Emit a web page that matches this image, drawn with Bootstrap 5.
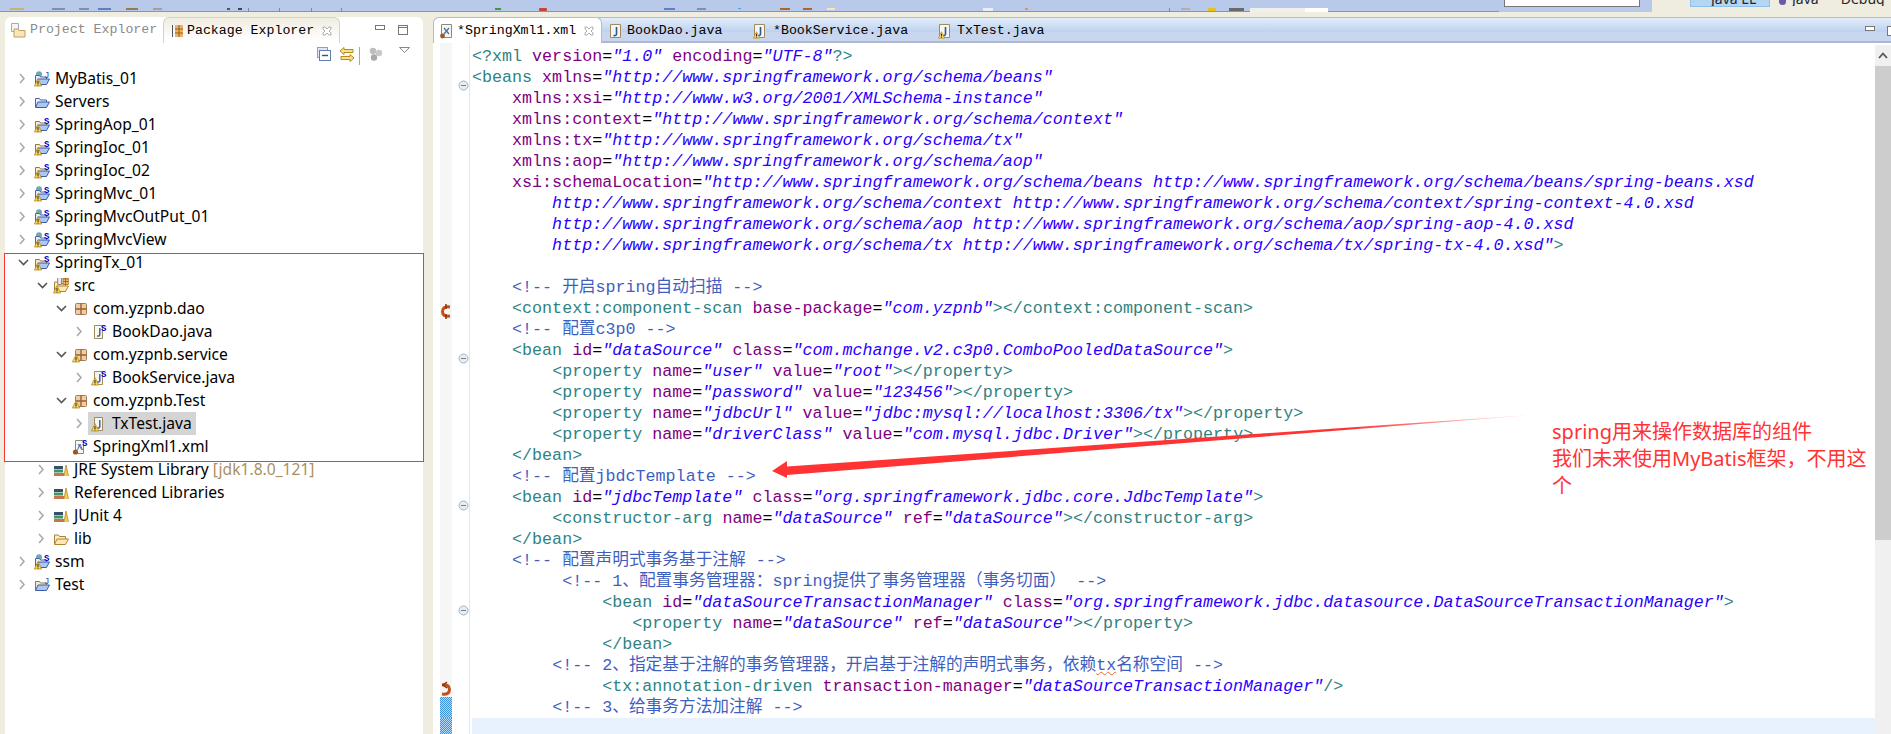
<!DOCTYPE html>
<html lang="zh-CN">
<head>
<meta charset="utf-8">
<title>Eclipse - SpringXml1.xml</title>
<link rel="stylesheet" href="https://cdn.jsdelivr.net/npm/bootstrap@5.3.0/dist/css/bootstrap.min.css">
<style>
html,body{height:734px;overflow:hidden}
body{background:#efece0;position:relative;margin:0;font-family:"Noto Sans","Noto Sans CJK SC",sans-serif}
.topstrip{height:12px;background:#b8c9ea;overflow:hidden}
.stripline{width:1499px;height:12px;border-bottom:1px solid #8295bd;flex:none}
.searchbox{width:136px;height:7px;margin-left:5px;background:#fff;border:1px solid #777;border-top:0;flex:none}
.sashend{width:8px;margin-left:4px;height:12px;background:#b8c9ea;flex:none}
.beige{flex:1;background:#efece0;height:12px;display:flex;align-items:flex-start;position:relative;overflow:hidden;font-size:14px;line-height:14px}
.persp{margin-left:38px;width:80px;height:7px;background:#b5d6f2;border:1px solid #8fc0ea;border-top:0;overflow:hidden;padding-left:20px;flex:none}
.persp span,.persp2 span{display:block;margin-top:-8px;white-space:nowrap}
.persp2{margin-left:8px;height:6px;overflow:hidden;flex:none;padding-left:14px}
.pdot{width:7px;height:5px;background:#6a5aa8;border-radius:0 0 4px 4px;margin-left:9px;flex:none}
.persp2.afterdot{margin-left:6px;padding-left:0}
.stage{height:722px;padding-top:5px;gap:10px}
.leftpane{width:418px;margin-left:5px;background:#fff;border-radius:6px 6px 0 0;flex:none}
.ptabs{height:26px}
.ptab{height:26px;font:13.25px/26px "Liberation Mono",monospace;white-space:pre}
.ptab-off{width:158px;padding-left:5px;color:#8a8a8a}
.ptab-on{width:177px;padding-left:7px;color:#000;border:1px solid #d6d4c8;border-bottom:0;border-radius:6px 6px 0 0;background:linear-gradient(#efece0,#fff 90%)}
.ptab-icon{width:16px;height:16px;margin-right:4px;flex:none}
.ptab-on .ptab-icon{width:12px}
.minmax{margin-left:35px;gap:13px;height:20px}
.viewbar{height:24px;padding-left:312px}
.tree{font-size:15.6px;line-height:23px;color:#000}
.trow{height:23px;white-space:nowrap}
.lv0{padding-left:13px}.lv1{padding-left:32px}.lv2{padding-left:51px}.lv3{padding-left:70px}
.tw{width:11px;height:23px;flex:none;margin-right:5px}
.ic{width:16px;height:16px;flex:none;margin-right:5px}
.sel{background:#d4d4d4;height:23px;padding-left:3px;padding-right:4px;margin-left:-3px}
.deco{color:#a89060}
.editor{min-width:0}
.etabs{height:26px;background:linear-gradient(#e4edf9,#bdd2ef 60%,#bdd2ef 61%,#c9d6f0 62%,#c9d6f0);border-top:1px solid #a9c0dd;border-bottom:2px solid #aeb7cf;border-radius:6px 0 0 0;font:13.25px/23px "Liberation Mono",monospace;white-space:pre;color:#000}
.etab{height:25px;flex:none}
.etab-on{width:169px;background:#fff;padding-left:6px;border:1px solid #a9c0dd;border-bottom:0;border-radius:6px 6px 0 0;margin-top:-1px;height:26px}
.et2{width:146px;padding-left:7px;gap:5px}.et3{width:190px;padding-left:5px;gap:7px}.et4{width:120px;padding-left:0;gap:6px}
.etabicon{width:13px;height:16px;flex:none}
.emin{margin-left:auto;margin-right:2px;gap:12px;width:24px}
.ebody{min-height:0;background:#fff}
.codecol{flex:1;min-width:0;overflow:hidden;padding-top:3px;background:linear-gradient(90deg,#fff 7px,#f6f6f6 7px 19px,#fff 19px 36px,#e6e6e6 36px 37px,#fff 37px)}
.cl{height:21px;display:flex}
.gt{width:39px;height:21px;flex:none;display:flex}
.an{width:12px;margin-left:7px;height:21px;flex:none}
.hatch{background:#6aaee6 repeating-conic-gradient(#3d94dc 0 25%,#b4d8f4 0 50%) 0 0/2px 2px}
.fd{width:17px;height:21px;flex:none;padding:5px 0 0 6px}
.tx{font:16.7px/21px "Liberation Mono","Noto Sans CJK SC",monospace;white-space:pre;flex:1;color:#000}
.t{color:#2f8383}.a{color:#7f007f}.v{color:#2a00ff;font-style:italic}.c{color:#3f5fbf}
.curline{background:#e8f2fe}
.spell{text-decoration:underline wavy #e8692a 1px}
.vbar{width:16px;flex:none;background:#f0f0f0;margin-top:2px}
.vbtn{height:21px;text-align:center;padding-top:7px}
.vthumb{height:474px;background:#cdcdcd}
.redbox{position:absolute;left:4px;top:253px;width:420px;height:209px;border:1.5px solid #f33;pointer-events:none}
.overlay{position:absolute;left:0;top:0;pointer-events:none}
.note{position:absolute;left:1552px;top:418px;font:20px/27px "Noto Sans","Noto Sans CJK SC",sans-serif;color:#f33;white-space:pre}
</style>
</head>
<body>
<svg width="0" height="0" class="position-absolute">
<defs>
<symbol id="fb" viewBox="0 0 16 16"><path d="M1.5 13V4.5h4l1 1.5h6v2" fill="#e6edf8" stroke="#4a65a8"/><path d="M1.5 13.5 4 8h11.5l-3 5.5z" fill="#a9c9f2" stroke="#3e5aa6"/></symbol>
<symbol id="ft" viewBox="0 0 16 16"><path d="M1.5 13V4.5h4l1 1.5h6v2" fill="#f8ecc8" stroke="#8d7a4d"/><path d="M1.5 13.5 4 8h11.5l-3 5.5z" fill="#a9c9f2" stroke="#3e5aa6"/></symbol>
<symbol id="fy" viewBox="0 0 16 16"><path d="M1.5 13V4h4l1 1.5h6V8" fill="#fbeec6" stroke="#a8803a"/><path d="M1.5 13.5 4 8h11.5l-3 5.5z" fill="#fde9b0" stroke="#b08436"/></symbol>
<symbol id="wn" viewBox="0 0 16 16"><path d="M4 7.7 7.6 15H.4z" fill="#fbd85c" stroke="#b88a22" stroke-width=".8"/><rect x="3.5" y="10" width="1" height="3" fill="#222"/><rect x="3.5" y="13.5" width="1" height="1" fill="#222"/></symbol>
<symbol id="gl" viewBox="0 0 16 16"><circle cx="5" cy="3.2" r="3" fill="#6ba6c6"/><path d="M3 2h2l1 2-2 1.5z" fill="#7bb46a"/></symbol>
<symbol id="pk" viewBox="0 0 16 16"><rect x="3.5" y="2.5" width="11" height="11" rx="1" fill="#eccfa8" stroke="#a87b4f"/><path d="M9 2.5v11M3.5 8h11" stroke="#9c5f35" stroke-width="1.4"/></symbol>
<symbol id="pg" viewBox="0 0 16 16"><path d="M3.5 1.5h8v13h-8z" fill="#f7f6ef" stroke="#a08c5c"/><path d="M8.8 4v6.5q0 2-2.8 1.5" fill="none" stroke="#3c63ad" stroke-width="1.5"/></symbol>
<symbol id="xp" viewBox="0 0 16 16"><path d="M3.5 1.5h8v13h-8z" fill="#f7f6ef" stroke="#8b8b7a"/><path d="M5.5 11 8 5l2.5 6M6 5l4 6" fill="none" stroke="#4a6fa8" stroke-width="1"/><circle cx="3.5" cy="13" r="2.6" fill="#96592f"/></symbol>
<symbol id="lb" viewBox="0 0 16 16"><rect x="1" y="4" width="9" height="3" fill="#3a4f6a"/><rect x="1" y="7.5" width="9" height="3" fill="#3f9468"/><rect x="1" y="11" width="10" height="3" fill="#c8744a"/><path d="M11 14 13 3l2.5 11" fill="#f5cb55" stroke="#b88a22" stroke-width=".8"/></symbol>
<symbol id="ps" viewBox="0 0 16 16"><rect x="1" y="1" width="5" height="13" fill="#e8e8f0" stroke="#7d6a3a"/><rect x="8" y="3" width="7" height="11" fill="#f0c070" stroke="#9a5e20"/><path d="M8 6.5h7M8 10h7M11.5 3v11" stroke="#8a4a18"/></symbol>
<symbol id="chr" viewBox="0 0 11 23"><path d="M2 7l4 4.500-4 4.500" fill="none" stroke="#aaa" stroke-width="1.600"/></symbol>
<symbol id="chd" viewBox="0 0 11 23"><path d="M1 9l4.500 4.500L10 9" fill="none" stroke="#555" stroke-width="1.600"/></symbol>
<symbol id="fold" viewBox="0 0 11 11"><circle cx="5.500" cy="5.500" r="4.500" fill="#e8edf2" stroke="#a4b2c0"/><path d="M3 5.500h5" stroke="#6f8193"/></symbol>
</defs>
</svg>

<div class="topstrip d-flex">
  <div class="stripline">
    <svg width="1499" height="11" aria-hidden="true">
      <g>
      <rect x="10" width="14" height="2" fill="#c9b27a"/><rect x="52" width="13" height="2" fill="#7d8fb5"/><rect x="79" width="10" height="2" fill="#7d8fb5"/><rect x="98" width="13" height="2" fill="#5f7fc0"/><rect x="126" width="12" height="2" fill="#96794a"/><rect x="153" width="9" height="2" fill="#a0a098"/><rect x="227" width="3" height="2" fill="#555"/><rect x="238" width="4" height="2" fill="#444"/>
      <rect x="248" width="1" height="5" fill="#7a8aa8"/><rect x="279" width="1" height="5" fill="#7a8aa8"/><rect x="311" width="1" height="5" fill="#7a8aa8"/><rect x="341" width="1" height="5" fill="#7a8aa8"/>
      <rect x="495" width="6" height="2" fill="#3a9a4a"/><rect x="539" width="8" height="3" rx="1" fill="#c8443c"/><rect x="664" width="11" height="2" fill="#5f7fc0"/><rect x="697" width="9" height="2" fill="#7d8fb5"/><rect x="738" width="3" height="1" fill="#5a9ad0"/><rect x="780" width="10" height="2" fill="#b0642a"/><rect x="803" width="9" height="2" fill="#b0642a"/><rect x="827" width="8" height="2" fill="#f5e9b5"/>
      <rect x="983" width="10" height="3" fill="#e8eef8"/><rect x="1025" width="3" height="2" fill="#d9a030"/><rect x="1169" width="1" height="5" fill="#7a8aa8"/><rect x="1181" width="9" height="2" fill="#b0b0a8"/><rect x="1208" width="8" height="3" fill="#e8c020"/><rect x="1229" width="15" height="3" fill="#6a6a6a"/>
      <rect x="1250" width="55" height="5" fill="#efefef"/><rect x="1305" width="23" height="5" fill="#fff"/>
      </g>
    </svg>
  </div>
  <div class="searchbox"></div>
  <div class="sashend"></div>
  <div class="beige">
    <div class="persp"><span>Java EE</span></div>
    <div class="pdot"></div>
    <div class="persp2 afterdot"><span>Java</span></div>
    <div class="persp2"><span>Debug</span></div>
  </div>
</div>

<div class="stage d-flex">
  <div class="leftpane d-flex flex-column">
    <div class="ptabs d-flex">
      <div class="ptab ptab-off d-flex align-items-center"><svg class="ptab-icon" viewBox="0 0 16 16"><path d="M1.5 1.5h7v8h-7z" fill="#f4f4f4" stroke="#aaa"/><path d="M4 7h4l1 1.5h6V15H4z" fill="#f8e6b8" stroke="#c0a060"/></svg><span>Project Explorer</span></div>
      <div class="ptab ptab-on d-flex align-items-center"><svg class="ptab-icon" viewBox="0 0 12 16"><path d="M1.500 2v12" stroke="#555" fill="none"/><rect x="4" y="2" width="8" height="12" fill="#e9b26a"/><path d="M4 6h8M4 10h8M8 2v12" stroke="#9c5f1e"/></svg><span>Package Explorer</span><svg class="ms-2" width="10" height="10" viewBox="0 0 10 10"><path d="M1 1h2l2 2 2-2h2v2L7 5l2 2v2H7L5 7 3 9H1V7l2-2-2-2z" fill="#fff" stroke="#999" stroke-width=".8"/></svg></div>
      <div class="minmax d-flex align-items-start pt-2">
        <svg width="10" height="5"><rect x=".5" y=".5" width="9" height="4" fill="#fff" stroke="#777"/></svg>
        <svg width="10" height="10"><rect x=".5" y=".5" width="9" height="9" fill="#fff" stroke="#777"/><path d="M0 2.5h10" stroke="#777"/></svg>
      </div>
    </div>
    <div class="viewbar d-flex align-items-start pt-1">
      <svg width="14" height="14" viewBox="0 0 14 14"><rect x=".5" y=".5" width="10" height="10" fill="#dfe8f4" stroke="#8aa0c0"/><rect x="2.5" y="3.5" width="11" height="10" fill="#fff" stroke="#5f80ad"/><path d="M5 8.5h6" stroke="#2c558c" stroke-width="1.4"/></svg>
      <svg class="ms-2" width="16" height="15" viewBox="0 0 16 15"><path d="M5 .5 1 4l4 3.5V5.5h9v-3H5z" fill="#f8e28a" stroke="#b58a1a"/><path d="M11 7.5l4 3.5-4 3.5v-2H2v-3h9z" fill="#f8e28a" stroke="#b58a1a"/></svg>
      <svg class="ms-1" width="2" height="18"><rect width="1" height="18" fill="#a8a8a8"/></svg>
      <svg class="ms-2" width="14" height="14" viewBox="0 0 14 14"><circle cx="4" cy="4" r="3.2" fill="#bdbdbd"/><circle cx="10" cy="6" r="3.2" fill="#c9c9c9"/><circle cx="5" cy="10.5" r="3.2" fill="#a9a9a9"/></svg>
      <svg class="ms-3" width="11" height="6" viewBox="0 0 11 6"><path d="M.5.5h10l-5 5z" fill="#fff" stroke="#888"/></svg>
    </div>
    <div class="tree flex-grow-1">
      <div class="trow d-flex align-items-center lv0"><svg class="tw"><use href="#chr"/></svg><svg class="ic"><use href="#gl"/><use href="#fb"/><use href="#wn"/><text x="10" y="7" font-family="Liberation Mono" font-size="9" fill="#1a4fb0">J</text></svg><span>MyBatis_01</span></div>
      <div class="trow d-flex align-items-center lv0"><svg class="tw"><use href="#chr"/></svg><svg class="ic"><use href="#fb"/></svg><span>Servers</span></div>
      <div class="trow d-flex align-items-center lv0"><svg class="tw"><use href="#chr"/></svg><svg class="ic"><use href="#ft"/><use href="#wn"/><text x="10" y="7" font-family="Liberation Mono" font-size="9" font-weight="700" fill="#00c">S</text></svg><span>SpringAop_01</span></div>
      <div class="trow d-flex align-items-center lv0"><svg class="tw"><use href="#chr"/></svg><svg class="ic"><use href="#ft"/><use href="#wn"/><text x="10" y="7" font-family="Liberation Mono" font-size="9" font-weight="700" fill="#00c">S</text></svg><span>SpringIoc_01</span></div>
      <div class="trow d-flex align-items-center lv0"><svg class="tw"><use href="#chr"/></svg><svg class="ic"><use href="#ft"/><use href="#wn"/><text x="10" y="7" font-family="Liberation Mono" font-size="9" font-weight="700" fill="#00c">S</text></svg><span>SpringIoc_02</span></div>
      <div class="trow d-flex align-items-center lv0"><svg class="tw"><use href="#chr"/></svg><svg class="ic"><use href="#gl"/><use href="#fb"/><use href="#wn"/><text x="10" y="7" font-family="Liberation Mono" font-size="9" font-weight="700" fill="#00c">S</text></svg><span>SpringMvc_01</span></div>
      <div class="trow d-flex align-items-center lv0"><svg class="tw"><use href="#chr"/></svg><svg class="ic"><use href="#gl"/><use href="#fb"/><use href="#wn"/><text x="10" y="7" font-family="Liberation Mono" font-size="9" font-weight="700" fill="#00c">S</text></svg><span>SpringMvcOutPut_01</span></div>
      <div class="trow d-flex align-items-center lv0"><svg class="tw"><use href="#chr"/></svg><svg class="ic"><use href="#gl"/><use href="#fb"/><use href="#wn"/><text x="10" y="7" font-family="Liberation Mono" font-size="9" font-weight="700" fill="#00c">S</text></svg><span>SpringMvcView</span></div>
      <div class="trow d-flex align-items-center lv0"><svg class="tw"><use href="#chd"/></svg><svg class="ic"><use href="#ft"/><use href="#wn"/><text x="10" y="7" font-family="Liberation Mono" font-size="9" font-weight="700" fill="#00c">S</text></svg><span>SpringTx_01</span></div>
      <div class="trow d-flex align-items-center lv1"><svg class="tw"><use href="#chd"/></svg><svg class="ic"><use href="#fy"/><use href="#ps" x="4" y="-4" width="12" height="12"/><use href="#wn"/></svg><span>src</span></div>
      <div class="trow d-flex align-items-center lv2"><svg class="tw"><use href="#chd"/></svg><svg class="ic"><use href="#pk"/></svg><span>com.yzpnb.dao</span></div>
      <div class="trow d-flex align-items-center lv3"><svg class="tw"><use href="#chr"/></svg><svg class="ic"><use href="#pg"/><text x="10" y="7" font-family="Liberation Mono" font-size="9" font-weight="700" fill="#00c">S</text></svg><span>BookDao.java</span></div>
      <div class="trow d-flex align-items-center lv2"><svg class="tw"><use href="#chd"/></svg><svg class="ic"><use href="#pk"/><use href="#wn"/></svg><span>com.yzpnb.service</span></div>
      <div class="trow d-flex align-items-center lv3"><svg class="tw"><use href="#chr"/></svg><svg class="ic"><use href="#pg"/><use href="#wn"/><text x="10" y="7" font-family="Liberation Mono" font-size="9" font-weight="700" fill="#00c">S</text></svg><span>BookService.java</span></div>
      <div class="trow d-flex align-items-center lv2"><svg class="tw"><use href="#chd"/></svg><svg class="ic"><use href="#pk"/><use href="#wn"/></svg><span>com.yzpnb.Test</span></div>
      <div class="trow d-flex align-items-center lv3"><svg class="tw"><use href="#chr"/></svg><div class="sel d-flex align-items-center"><svg class="ic"><use href="#pg"/><use href="#wn"/></svg><span>TxTest.java</span></div></div>
      <div class="trow d-flex align-items-center lv2"><div class="tw"></div><svg class="ic"><use href="#xp"/><text x="10" y="7" font-family="Liberation Mono" font-size="9" font-weight="700" fill="#00c">S</text></svg><span>SpringXml1.xml</span></div>
      <div class="trow d-flex align-items-center lv1"><svg class="tw"><use href="#chr"/></svg><svg class="ic"><use href="#lb"/></svg><span>JRE System Library <span class="deco">[jdk1.8.0_121]</span></span></div>
      <div class="trow d-flex align-items-center lv1"><svg class="tw"><use href="#chr"/></svg><svg class="ic"><use href="#lb"/></svg><span>Referenced Libraries</span></div>
      <div class="trow d-flex align-items-center lv1"><svg class="tw"><use href="#chr"/></svg><svg class="ic"><use href="#lb"/></svg><span>JUnit 4</span></div>
      <div class="trow d-flex align-items-center lv1"><svg class="tw"><use href="#chr"/></svg><svg class="ic"><use href="#fy"/></svg><span>lib</span></div>
      <div class="trow d-flex align-items-center lv0"><svg class="tw"><use href="#chr"/></svg><svg class="ic"><use href="#gl"/><use href="#fb"/><use href="#wn"/><text x="10" y="7" font-family="Liberation Mono" font-size="9" font-weight="700" fill="#00c">S</text></svg><span>ssm</span></div>
      <div class="trow d-flex align-items-center lv0"><svg class="tw"><use href="#chr"/></svg><svg class="ic"><use href="#ft"/><text x="10" y="7" font-family="Liberation Mono" font-size="9" fill="#1a4fb0">J</text></svg><span>Test</span></div>
    </div>
  </div>

  <div class="editor flex-grow-1 d-flex flex-column">
    <div class="etabs d-flex">
      <div class="etab etab-on d-flex align-items-center"><svg class="etabicon me-1" viewBox="0 0 13 16"><path d="M1.500 1.500h10v13h-10z" fill="#f7f6ef" stroke="#8b8b7a"/><path d="M4 5l5 6M9 5l-5 6" stroke="#4a6fa8" stroke-width="1.300" fill="none"/><circle cx="2.500" cy="13" r="2.400" fill="#96592f"/></svg><span>*SpringXml1.xml</span><svg class="ms-2" width="10" height="10" viewBox="0 0 10 10"><path d="M1 1h2l2 2 2-2h2v2L7 5l2 2v2H7L5 7 3 9H1V7l2-2-2-2z" fill="#fff" stroke="#999" stroke-width=".8"/></svg></div>
      <div class="etab et2 d-flex align-items-center"><svg class="etabicon" viewBox="0 0 13 16"><path d="M1.500 1.500h10v13h-10z" fill="#f7f6ef" stroke="#a08c5c"/><path d="M7.500 4v7q0 2-3 1.500" fill="none" stroke="#2a55a8" stroke-width="1.600"/></svg><span>BookDao.java</span></div>
      <div class="etab et3 d-flex align-items-center"><svg class="etabicon" viewBox="0 0 13 16"><path d="M1.500 1.500h10v13h-10z" fill="#f7f6ef" stroke="#a08c5c"/><path d="M7.500 4v7q0 2-3 1.500" fill="none" stroke="#2a55a8" stroke-width="1.600"/><use href="#wn" width="14" height="14" y="2"/></svg><span>*BookService.java</span></div>
      <div class="etab et4 d-flex align-items-center"><svg class="etabicon" viewBox="0 0 13 16"><path d="M1.500 1.500h10v13h-10z" fill="#f7f6ef" stroke="#a08c5c"/><path d="M7.500 4v7q0 2-3 1.500" fill="none" stroke="#2a55a8" stroke-width="1.600"/><use href="#wn" width="14" height="14" y="2"/></svg><span>TxTest.java</span></div>
      <div class="emin d-flex align-items-start pt-2">
        <svg class="flex-shrink-0" width="10" height="5"><rect x=".5" y=".5" width="9" height="4" fill="#fff" stroke="#777"/></svg>
        <svg class="flex-shrink-0" width="4" height="10"><rect x=".5" y=".5" width="9" height="9" fill="#fff" stroke="#777"/></svg>
      </div>
    </div>
    <div class="ebody flex-grow-1 d-flex overflow-hidden">
      <div class="codecol">
<div class="cl"><div class="gt"><div class="an"></div><div class="fd"></div></div><div class="tx"><span class="t">&lt;?xml</span> <span class="a">version</span>=<span class="v">"1.0"</span> <span class="a">encoding</span>=<span class="v">"UTF-8"</span><span class="t">?&gt;</span></div></div>
<div class="cl"><div class="gt"><div class="an"></div><div class="fd"><svg width="11" height="11"><use href="#fold"/></svg></div></div><div class="tx"><span class="t">&lt;beans</span> <span class="a">xmlns</span>=<span class="v">"http://www.springframework.org/schema/beans"</span></div></div>
<div class="cl"><div class="gt"><div class="an"></div><div class="fd"></div></div><div class="tx">    <span class="a">xmlns:xsi</span>=<span class="v">"http://www.w3.org/2001/XMLSchema-instance"</span></div></div>
<div class="cl"><div class="gt"><div class="an"></div><div class="fd"></div></div><div class="tx">    <span class="a">xmlns:context</span>=<span class="v">"http://www.springframework.org/schema/context"</span></div></div>
<div class="cl"><div class="gt"><div class="an"></div><div class="fd"></div></div><div class="tx">    <span class="a">xmlns:tx</span>=<span class="v">"http://www.springframework.org/schema/tx"</span></div></div>
<div class="cl"><div class="gt"><div class="an"></div><div class="fd"></div></div><div class="tx">    <span class="a">xmlns:aop</span>=<span class="v">"http://www.springframework.org/schema/aop"</span></div></div>
<div class="cl"><div class="gt"><div class="an"></div><div class="fd"></div></div><div class="tx">    <span class="a">xsi:schemaLocation</span>=<span class="v">"http://www.springframework.org/schema/beans http://www.springframework.org/schema/beans/spring-beans.xsd</span></div></div>
<div class="cl"><div class="gt"><div class="an"></div><div class="fd"></div></div><div class="tx"><span class="v">        http://www.springframework.org/schema/context http://www.springframework.org/schema/context/spring-context-4.0.xsd</span></div></div>
<div class="cl"><div class="gt"><div class="an"></div><div class="fd"></div></div><div class="tx"><span class="v">        http://www.springframework.org/schema/aop http://www.springframework.org/schema/aop/spring-aop-4.0.xsd</span></div></div>
<div class="cl"><div class="gt"><div class="an"></div><div class="fd"></div></div><div class="tx"><span class="v">        http://www.springframework.org/schema/tx http://www.springframework.org/schema/tx/spring-tx-4.0.xsd"</span><span class="t">&gt;</span></div></div>
<div class="cl"><div class="gt"><div class="an"></div><div class="fd"></div></div><div class="tx"></div></div>
<div class="cl"><div class="gt"><div class="an"></div><div class="fd"></div></div><div class="tx">    <span class="c">&lt;!-- 开启spring自动扫描 --&gt;</span></div></div>
<div class="cl"><div class="gt"><div class="an"><svg width="12" height="21" viewBox="0 0 12 21"><path d="M10 6Q2.500 5 2.500 10.500T10 15" fill="none" stroke="#c0501c" stroke-width="3"/><path d="M6 3v5M6 13v5" stroke="#8a3410" stroke-width="1.500"/></svg></div><div class="fd"></div></div><div class="tx">    <span class="t">&lt;context:component-scan</span> <span class="a">base-package</span>=<span class="v">"com.yzpnb"</span><span class="t">&gt;&lt;/context:component-scan&gt;</span></div></div>
<div class="cl"><div class="gt"><div class="an"></div><div class="fd"></div></div><div class="tx">    <span class="c">&lt;!-- 配置c3p0 --&gt;</span></div></div>
<div class="cl"><div class="gt"><div class="an"></div><div class="fd"><svg width="11" height="11"><use href="#fold"/></svg></div></div><div class="tx">    <span class="t">&lt;bean</span> <span class="a">id</span>=<span class="v">"dataSource"</span> <span class="a">class</span>=<span class="v">"com.mchange.v2.c3p0.ComboPooledDataSource"</span><span class="t">&gt;</span></div></div>
<div class="cl"><div class="gt"><div class="an"></div><div class="fd"></div></div><div class="tx">        <span class="t">&lt;property</span> <span class="a">name</span>=<span class="v">"user"</span> <span class="a">value</span>=<span class="v">"root"</span><span class="t">&gt;&lt;/property&gt;</span></div></div>
<div class="cl"><div class="gt"><div class="an"></div><div class="fd"></div></div><div class="tx">        <span class="t">&lt;property</span> <span class="a">name</span>=<span class="v">"password"</span> <span class="a">value</span>=<span class="v">"123456"</span><span class="t">&gt;&lt;/property&gt;</span></div></div>
<div class="cl"><div class="gt"><div class="an"></div><div class="fd"></div></div><div class="tx">        <span class="t">&lt;property</span> <span class="a">name</span>=<span class="v">"jdbcUrl"</span> <span class="a">value</span>=<span class="v">"jdbc:mysql://localhost:3306/tx"</span><span class="t">&gt;&lt;/property&gt;</span></div></div>
<div class="cl"><div class="gt"><div class="an"></div><div class="fd"></div></div><div class="tx">        <span class="t">&lt;property</span> <span class="a">name</span>=<span class="v">"driverClass"</span> <span class="a">value</span>=<span class="v">"com.mysql.jdbc.Driver"</span><span class="t">&gt;&lt;/property&gt;</span></div></div>
<div class="cl"><div class="gt"><div class="an"></div><div class="fd"></div></div><div class="tx">    <span class="t">&lt;/bean&gt;</span></div></div>
<div class="cl"><div class="gt"><div class="an"></div><div class="fd"></div></div><div class="tx">    <span class="c">&lt;!-- 配置jbdcTemplate --&gt;</span></div></div>
<div class="cl"><div class="gt"><div class="an"></div><div class="fd"><svg width="11" height="11"><use href="#fold"/></svg></div></div><div class="tx">    <span class="t">&lt;bean</span> <span class="a">id</span>=<span class="v">"jdbcTemplate"</span> <span class="a">class</span>=<span class="v">"org.springframework.jdbc.core.JdbcTemplate"</span><span class="t">&gt;</span></div></div>
<div class="cl"><div class="gt"><div class="an"></div><div class="fd"></div></div><div class="tx">        <span class="t">&lt;constructor-arg</span> <span class="a">name</span>=<span class="v">"dataSource"</span> <span class="a">ref</span>=<span class="v">"dataSource"</span><span class="t">&gt;&lt;/constructor-arg&gt;</span></div></div>
<div class="cl"><div class="gt"><div class="an"></div><div class="fd"></div></div><div class="tx">    <span class="t">&lt;/bean&gt;</span></div></div>
<div class="cl"><div class="gt"><div class="an"></div><div class="fd"></div></div><div class="tx">    <span class="c">&lt;!-- 配置声明式事务基于注解 --&gt;</span></div></div>
<div class="cl"><div class="gt"><div class="an"></div><div class="fd"></div></div><div class="tx">         <span class="c">&lt;!-- 1、配置事务管理器：spring提供了事务管理器（事务切面） --&gt;</span></div></div>
<div class="cl"><div class="gt"><div class="an"></div><div class="fd"><svg width="11" height="11"><use href="#fold"/></svg></div></div><div class="tx">             <span class="t">&lt;bean</span> <span class="a">id</span>=<span class="v">"dataSourceTransactionManager"</span> <span class="a">class</span>=<span class="v">"org.springframework.jdbc.datasource.DataSourceTransactionManager"</span><span class="t">&gt;</span></div></div>
<div class="cl"><div class="gt"><div class="an"></div><div class="fd"></div></div><div class="tx">                <span class="t">&lt;property</span> <span class="a">name</span>=<span class="v">"dataSource"</span> <span class="a">ref</span>=<span class="v">"dataSource"</span><span class="t">&gt;&lt;/property&gt;</span></div></div>
<div class="cl"><div class="gt"><div class="an"></div><div class="fd"></div></div><div class="tx">             <span class="t">&lt;/bean&gt;</span></div></div>
<div class="cl"><div class="gt"><div class="an"></div><div class="fd"></div></div><div class="tx">        <span class="c">&lt;!-- 2、指定基于注解的事务管理器，开启基于注解的声明式事务，依赖<span class="spell">tx</span>名称空间 --&gt;</span></div></div>
<div class="cl"><div class="gt"><div class="an"><svg width="12" height="21" viewBox="0 0 12 21"><path d="M2 6Q9.500 5 9.500 10.500T2 15" fill="none" stroke="#c0501c" stroke-width="3"/><path d="M7 3 3 6l4 3" fill="none" stroke="#8a3410" stroke-width="1.500"/></svg></div><div class="fd"></div></div><div class="tx">             <span class="t">&lt;tx:annotation-driven</span> <span class="a">transaction-manager</span>=<span class="v">"dataSourceTransactionManager"</span><span class="t">/&gt;</span></div></div>
<div class="cl"><div class="gt"><div class="an hatch"></div><div class="fd"></div></div><div class="tx">        <span class="c">&lt;!-- 3、给事务方法加注解 --&gt;</span></div></div>
<div class="cl"><div class="gt"><div class="an hatch"></div><div class="fd"></div></div><div class="tx curline"></div></div>
      </div>
      <div class="vbar">
        <div class="vbtn"><svg class="d-block mx-auto" width="10" height="7" viewBox="0 0 10 7"><path d="M1 6l4-4.500L9 6" fill="none" stroke="#555" stroke-width="1.800"/></svg></div>
        <div class="vthumb"></div>
      </div>
    </div>
  </div>
</div>

<div class="redbox"></div>
<svg class="overlay" width="1891" height="734" aria-hidden="true">
  <defs><linearGradient id="fade" x1="772" y1="0" x2="1544" y2="0" gradientUnits="userSpaceOnUse"><stop offset="0" stop-color="#f33"/><stop offset=".75" stop-color="#f33"/><stop offset="1" stop-color="#f33" stop-opacity="0"/></linearGradient></defs>
  <path d="M772 471 787 461 787 466.500 1544 414 787 475 787 478z" fill="url(#fade)"/>
</svg>
<div class="note">spring用来操作数据库的组件
我们未来使用MyBatis框架，不用这
个</div>
<script src="https://cdn.jsdelivr.net/npm/bootstrap@5.3.0/dist/js/bootstrap.bundle.min.js"></script>
</body>
</html>
